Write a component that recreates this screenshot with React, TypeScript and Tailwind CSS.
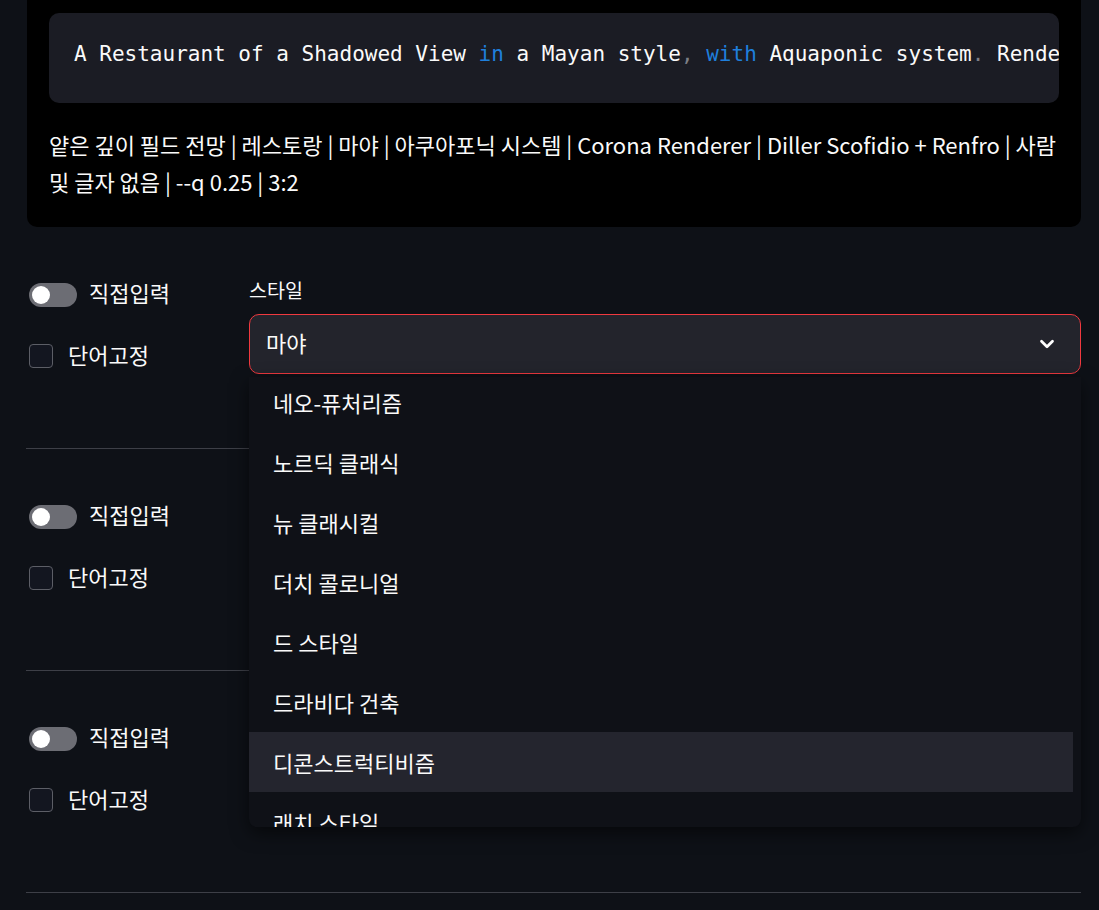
import { ChevronDown } from "lucide-react";

const options = [
  "네오-퓨처리즘",
  "노르딕 클래식",
  "뉴 클래시컬",
  "더치 콜로니얼",
  "드 스타일",
  "드라비다 건축",
  "디콘스트럭티비즘",
  "래치 스타일",
];

function Toggle() {
  return (
    <div className="flex items-center h-[30px]">
      <div className="relative ml-[3px] w-[48px] h-[24px] rounded-full bg-[#6c6d74]">
        <div className="absolute left-[3px] top-[3px] w-[18px] h-[18px] rounded-full bg-white" />
      </div>
      <span className="relative -top-[3px] ml-[12px] text-[22px] text-[#fafafa]">직접입력</span>
    </div>
  );
}

function Check() {
  return (
    <div className="flex items-center h-[30px] mt-[31px]">
      <div className="w-[24px] h-[24px] ml-[3px] rounded-[4px] border border-[#5c5e66] bg-[#131620]" />
      <span className="relative -top-[2px] ml-[15px] text-[22px] text-[#fafafa]">단어고정</span>
    </div>
  );
}

function Dropdown() {
  return (
    <div className="absolute left-0 right-0 top-[63px] h-[450px] overflow-hidden rounded-b-[8px] bg-[#0f1117] shadow-[0_6px_18px_rgba(0,0,0,0.55)] z-10">
      <ul className="-mt-[5px] pr-[8px]">
        {options.map((o) => (
          <li
            key={o}
            className={
              "h-[60px] flex items-center pl-[24px] text-[22px] text-[#fafafa] " +
              (o === "디콘스트럭티비즘" ? "bg-[#24252e]" : "")
            }
          >
            {o}
          </li>
        ))}
      </ul>
    </div>
  );
}

function Section({ open }: { open?: boolean }) {
  return (
    <div className="h-[222px] border-b border-[#3d3f47] flex pt-[51px]">
      <div className="w-[223px] pt-[2px]">
        <Toggle />
        <Check />
      </div>
      {open && (
        <div className="flex-1">
          <div className="-mt-[2px] mb-[2px] text-[19.5px] leading-[28px] text-[#fafafa]">스타일</div>
          <div className="relative mt-[10px]">
            <div className="h-[60px] flex items-center justify-between px-[16px] rounded-[10px] bg-[#23242c] border border-[#f0393f]">
              <span className="relative -top-[2px] text-[22px] text-[#fafafa]">마야</span>
              <ChevronDown size={22} strokeWidth={3} className="text-white mr-[6px]" />
            </div>
            <Dropdown />
          </div>
        </div>
      )}
    </div>
  );
}

export default function App() {
  return (
    <div
      className="min-h-screen bg-[#0e1117] pl-[26px] pr-[18px] overflow-hidden"
      style={{ fontFamily: '"Noto Sans CJK KR", "Noto Sans", sans-serif' }}
    >
      <div className="ml-[1px] bg-black rounded-b-[10px] px-[22px] pt-[13px] pb-[27px]">
        <div className="h-[90px] flex items-center rounded-[10px] bg-[#1b1c24] pl-[25px] pb-[6px] overflow-hidden whitespace-nowrap">
          <code
            className="text-[21px] text-[#fafafa]"
            style={{ fontFamily: '"DejaVu Sans Mono", "Liberation Mono", monospace' }}
          >
            A Restaurant of a Shadowed View <span className="text-[#1f7fdc]">in</span> a Mayan style
            <span className="text-[#7d7f86]">,</span> <span className="text-[#1f7fdc]">with</span>{" "}
            Aquaponic system<span className="text-[#7d7f86]">.</span> Rende
          </code>
        </div>
        <p className="mt-[23px] text-[22px] leading-[37px] break-keep text-[#fafafa]">
          얕은 깊이 필드 전망 | 레스토랑 | 마야 | 아쿠아포닉 시스템 | Corona Renderer | Diller Scofidio + Renfro | 사람
          및 글자 없음 | --q 0.25 | 3:2
        </p>
      </div>
      <Section open />
      <Section />
      <Section />
    </div>
  );
}
